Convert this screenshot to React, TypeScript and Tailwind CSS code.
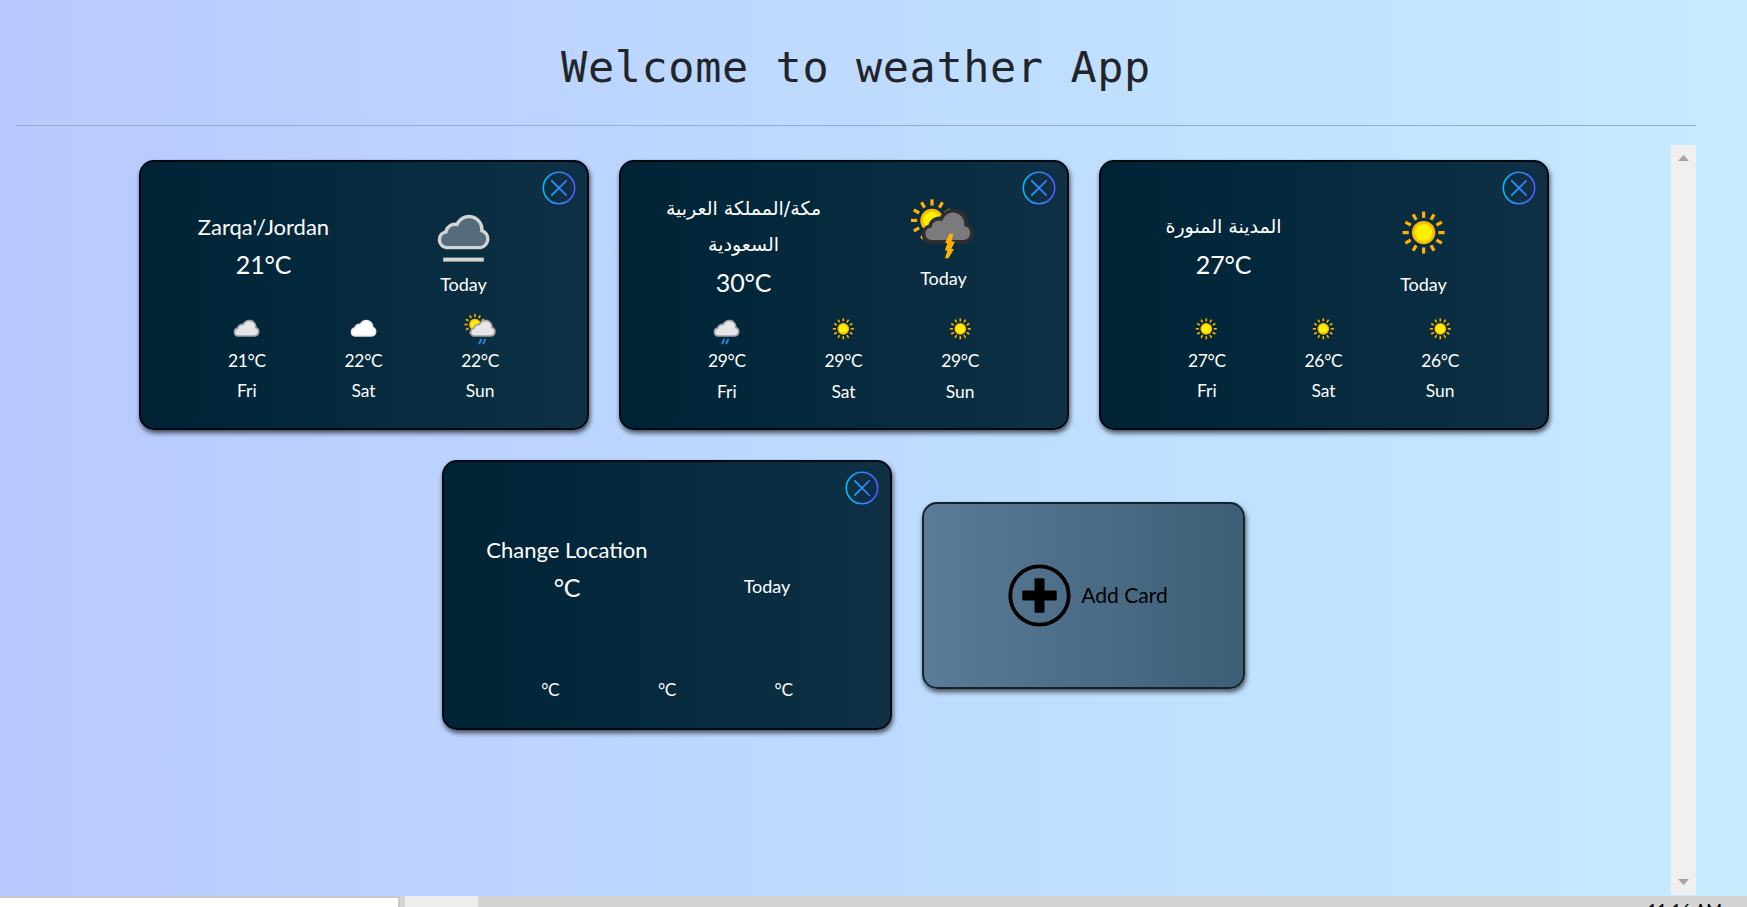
import React from "react";

type IconKind = "fog" | "cloudy" | "cloud" | "sunShower" | "shower" | "storm" | "sun";

interface Forecast {
  icon?: IconKind;
  temp: string;
  day?: string;
}

interface City {
  name: string[];
  arabic?: boolean;
  temp: string;
  icon?: IconKind;
  forecast: Forecast[];
}

const cities: City[] = [
  {
    name: ["Zarqa'/Jordan"],
    temp: "21",
    icon: "fog",
    forecast: [
      { icon: "cloudy", temp: "21", day: "Fri" },
      { icon: "cloud", temp: "22", day: "Sat" },
      { icon: "sunShower", temp: "22", day: "Sun" },
    ],
  },
  {
    name: ["مكة/المملكة العربية", "السعودية"],
    arabic: true,
    temp: "30",
    icon: "storm",
    forecast: [
      { icon: "shower", temp: "29", day: "Fri" },
      { icon: "sun", temp: "29", day: "Sat" },
      { icon: "sun", temp: "29", day: "Sun" },
    ],
  },
  {
    name: ["المدينة المنورة"],
    arabic: true,
    temp: "27",
    icon: "sun",
    forecast: [
      { icon: "sun", temp: "27", day: "Fri" },
      { icon: "sun", temp: "26", day: "Sat" },
      { icon: "sun", temp: "26", day: "Sun" },
    ],
  },
  {
    name: ["Change Location"],
    temp: "",
    forecast: [{ temp: "" }, { temp: "" }, { temp: "" }],
  },
];

const CLOUD =
  "M18 50H52A8.8 8.8 0 0 0 53.5 33A13 13 0 0 0 28.5 27A9 9 0 0 0 17.5 34.2A8 8 0 0 0 18 50Z";

function Sun({ cx, cy }: { cx: number; cy: number }) {
  return (
    <g transform={`translate(${cx} ${cy})`}>
      {Array.from({ length: 12 }, (_, i) => (
        <rect key={i} x="-1.6" y="-21" width="3.2" height="6.2" fill="#ffb300" transform={`rotate(${i * 30})`} />
      ))}
      <circle r="10.3" fill="#fff000" stroke="#ffb800" strokeWidth="2.8" />
    </g>
  );
}

function WeatherIcon({ kind, size }: { kind: IconKind; size: number }) {
  return (
    <svg width={size} height={size} viewBox="0 0 70 70" className="block">
      {kind === "sun" && <Sun cx={34.6} cy={35.6} />}
      {kind === "fog" && (
        <g transform="translate(-0.6 0.6)">
          <path d={CLOUD} fill="#566c7b" stroke="#d4d4d4" strokeWidth="3.4" />
          <rect x="14.8" y="60" width="40.6" height="4" fill="#d4d4d4" />
        </g>
      )}
      {(kind === "cloudy" || kind === "shower") && (
        <path d={CLOUD} fill="#e6e6e9" stroke="#a09f9f" strokeWidth="3.2" />
      )}
      {kind === "cloud" && <path d={CLOUD} fill="#ffffff" stroke="#e4e6e8" strokeWidth="3" />}
      {kind === "shower" && (
        <path d="M31 56L26 66M39 56L34 66" stroke="#2e86de" strokeWidth="3.8" />
      )}
      {kind === "sunShower" && (
        <>
          <Sun cx={24} cy={27} />
          <path d={CLOUD} fill="#e6e6e9" stroke="#a09f9f" strokeWidth="3.2" transform="translate(4.5 0)" />
          <path d="M37 56L32 66M45 56L40 66" stroke="#2e86de" strokeWidth="3.8" />
        </>
      )}
      {kind === "storm" && (
        <g transform="translate(-0.6 0.8)">
          <Sun cx={23.6} cy={28.6} />
          <path d={CLOUD} fill="#7b7b7e" stroke="#2e2e30" strokeWidth="3.8" transform="translate(4.2 0)" />
          <path d="M41 42H45L43 49.5L46.5 50L43 57L45.5 57.5L40 66.5H36.5L39 59L36.5 58.5L39 51.5L36.8 51Z" fill="#ffb300" />
        </g>
      )}
    </svg>
  );
}

function CloseButton() {
  return (
    <button className="absolute right-[11px] top-[9px]" aria-label="Remove">
      <svg width="34" height="34" viewBox="0 0 34 34" fill="none" className="block">
        <defs>
          <linearGradient id="ring" gradientUnits="userSpaceOnUse" x1="0" y1="17" x2="34" y2="17">
            <stop offset="0" stopColor="#00c0ff" />
            <stop offset="1" stopColor="#5558ff" />
          </linearGradient>
        </defs>
        <circle cx="17" cy="17" r="15.7" stroke="url(#ring)" strokeWidth="1.6" />
        <path d="M9.8 9.8L24.2 24.2M24.2 9.8L9.8 24.2" stroke="url(#ring)" strokeWidth="1.7" strokeLinecap="round" />
      </svg>
    </button>
  );
}

function CityCard({ city }: { city: City }) {
  const twoLines = city.name.length > 1;
  return (
    <article
      className={`relative flex h-[270px] w-[450px] flex-col items-center rounded-[15px] border-2 border-[#00080f] bg-linear-to-r from-[#002436] to-[#0f3045] text-white shadow-[1px_3px_5px_rgba(0,0,0,0.65)] ${
        city.icon ? "pt-[27px]" : "pt-[50px]"
      }`}
    >
      <CloseButton />
      <div className="grid h-[114px] w-[400px] grid-cols-2 items-center text-center">
        <div>
          {city.name.map((line) => (
            <div
              key={line}
              dir={city.arabic ? "rtl" : "ltr"}
              className={
                city.arabic
                  ? "relative -top-px h-9 whitespace-nowrap font-['DejaVu_Sans',sans-serif] text-[19px] leading-9"
                  : "h-9 whitespace-nowrap text-[22px] leading-9"
              }
            >
              {line}
            </div>
          ))}
          <div className="text-[25px] leading-[38px] tracking-[-0.2px]">{city.temp}°C</div>
        </div>
        <div
          className={`flex flex-col items-center ${
            twoLines ? "pb-1.5" : city.icon ? "pt-1.5" : "self-start pt-[57px]"
          }`}
        >
          {city.icon && <WeatherIcon kind={city.icon} size={70} />}
          <div className="text-[18px] leading-[34px]">Today</div>
        </div>
      </div>
      <div className="mb-[22px] mt-auto grid w-[350px] grid-cols-3 text-center text-[17.4px]">
        {city.forecast.map((f, i) => (
          <div key={i} className="flex flex-col items-center">
            {f.icon && <WeatherIcon kind={f.icon} size={35} />}
            <div className={f.day ? "leading-[30px] tracking-[-0.3px]" : "leading-[32px] tracking-[-0.3px]"}>
              {f.temp}°C
            </div>
            {f.day && (
              <div className={twoLines ? "relative top-px leading-[30px]" : "leading-[30px]"}>{f.day}</div>
            )}
          </div>
        ))}
      </div>
    </article>
  );
}

function AddCard() {
  return (
    <button className="flex h-[187px] w-[323px] items-center justify-center gap-[10px] rounded-[15px] border-2 border-[#15222b] bg-linear-to-r from-[#5b7b98] to-[#3c5f75] pl-[9px] text-black shadow-[1px_3px_5px_rgba(0,0,0,0.65)]">
      <svg width="63" height="63" viewBox="0 0 63 63" className="block">
        <circle cx="31.5" cy="31.5" r="29.2" fill="none" stroke="#000" strokeWidth="3.8" />
        <rect x="26.5" y="14.3" width="10" height="34.4" rx="1" />
        <rect x="14.3" y="26.5" width="34.4" height="10" rx="1" />
      </svg>
      <span className="text-[21px]">Add Card</span>
    </button>
  );
}

export default function App() {
  return (
    <div className="flex h-[907px] w-[1747px] flex-col overflow-hidden bg-linear-to-r from-[#b9c9ff] via-[#bedbff] to-[#c6ebff] font-['Lato',sans-serif]">
      <main className="ml-4 flex h-[896px] w-[1680px] shrink-0 flex-col">
        <header className="flex h-[126px] items-center justify-center border-b border-[#94adca]">
          <h1 className="mt-[11px] font-['DejaVu_Sans_Mono',monospace] text-[43.5px] leading-none tracking-[0.62px] text-[#212529]">
            Welcome to weather App
          </h1>
        </header>
        <div className="mt-[19px] flex h-[750px]">
          <section className="flex flex-1 flex-wrap content-start items-center justify-center gap-[30px] pt-[15px]">
            {cities.map((c) => (
              <CityCard key={c.name[0]} city={c} />
            ))}
            <AddCard />
          </section>
          <div className="flex w-[25px] flex-col items-center justify-between bg-[#f0f0f0] py-[10px]">
            <svg width="11" height="6" viewBox="0 0 11 6">
              <path d="M0 6L5.5 0L11 6Z" fill="#a3a3a3" />
            </svg>
            <svg width="11" height="6" viewBox="0 0 11 6">
              <path d="M0 0L5.5 6L11 0Z" fill="#a3a3a3" />
            </svg>
          </div>
        </div>
      </main>
      <footer className="flex h-[11px] shrink-0 overflow-hidden bg-[#d4d4d4]">
        <div className="w-[400px] border-r-2 border-t-2 border-[#c9c9c9] bg-white" />
        <div className="ml-[5px] w-[73px] bg-[#eeeeee]" />
        <div className="ml-auto mr-[25px] mt-[3px] text-[17px] leading-[24px] text-black">11:16 AM</div>
      </footer>
    </div>
  );
}
